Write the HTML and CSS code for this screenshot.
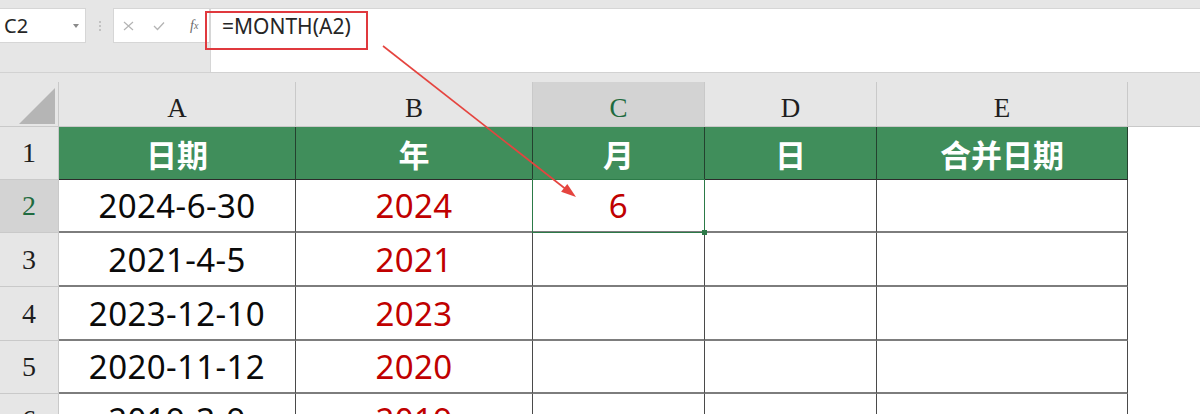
FILE: index.html
```html
<!DOCTYPE html>
<html lang="zh-CN">
<head>
<meta charset="utf-8">
<title>MONTH</title>
<link rel="stylesheet" href="styles.css">
</head>
<body>
<div class="topbar">
  <div class="namebox"><span class="nb-text">C2</span><span class="caret"></span></div>
  <div class="grip"><i></i><i></i><i></i></div>
  <div class="fxbox">
    <span class="btn"><svg width="11" height="10" viewBox="0 0 11 10"><path d="M1 1 L10 9 M10 1 L1 9" stroke="#b4b4b4" stroke-width="1.2" fill="none"/></svg></span>
    <span class="btn"><svg width="12" height="10" viewBox="0 0 12 10"><path d="M1 5 L4.5 8.5 L11 1.5" stroke="#b4b4b4" stroke-width="1.3" fill="none"/></svg></span>
    <span class="btn fx"><i>f</i><sub>x</sub></span>
  </div>
  <div class="formula"><span class="ftext">=MONTH(A2)</span></div>
</div>
<div class="gap"></div>
<div class="sheet">
  <div class="c colh corner"><svg width="58" height="44" viewBox="0 0 58 44"><polygon points="19,42 55,42 55,6" fill="#b5b5b5"/></svg></div>
  <div class="c colh">A</div>
  <div class="c colh">B</div>
  <div class="c colh selh">C</div>
  <div class="c colh">D</div>
  <div class="c colh">E</div>
  <div class="c colh last"></div>

  <div class="c rowh">1</div>
  <div class="c hd">日期</div>
  <div class="c hd">年</div>
  <div class="c hd">月</div>
  <div class="c hd">日</div>
  <div class="c hd">合并日期</div>
  <div class="c blank"></div>

  <div class="c rowh selh">2</div>
  <div class="c d">2024-6-30</div>
  <div class="c d red">2024</div>
  <div class="c d red active">6</div>
  <div class="c d"></div>
  <div class="c d"></div>
  <div class="c blank"></div>

  <div class="c rowh">3</div>
  <div class="c d">2021-4-5</div>
  <div class="c d red">2021</div>
  <div class="c d"></div>
  <div class="c d"></div>
  <div class="c d"></div>
  <div class="c blank"></div>

  <div class="c rowh">4</div>
  <div class="c d">2023-12-10</div>
  <div class="c d red">2023</div>
  <div class="c d"></div>
  <div class="c d"></div>
  <div class="c d"></div>
  <div class="c blank"></div>

  <div class="c rowh">5</div>
  <div class="c d">2020-11-12</div>
  <div class="c d red">2020</div>
  <div class="c d"></div>
  <div class="c d"></div>
  <div class="c d"></div>
  <div class="c blank"></div>

  <div class="c rowh">6</div>
  <div class="c d">2019-3-9</div>
  <div class="c d red">2019</div>
  <div class="c d"></div>
  <div class="c d"></div>
  <div class="c d"></div>
  <div class="c blank"></div>
</div>
<svg class="arrow" width="1200" height="414" viewBox="0 0 1200 414">
  <line x1="383" y1="46" x2="565" y2="188.5" stroke="#e5443f" stroke-width="1.6"/>
  <polygon points="576,197 561.1,191.7 567.3,183.9" fill="#e5443f"/>
</svg>
</body>
</html>
```

FILE: styles.css
```css
html, body {
  margin: 0;
  padding: 0;
}
body {
  width: 1200px;
  height: 414px;
  overflow: hidden;
  position: relative;
  background: #e6e6e6;
  font-family: "Noto Sans", "Noto Sans CJK SC", sans-serif;
  color: #000;
}

/* ---------- formula bar ---------- */
.topbar {
  display: flex;
  align-items: flex-start;
  height: 73px;
  box-sizing: border-box;
  padding-top: 8px;
  background: #e6e6e6;
  border-bottom: 1px solid #d2d2d2;
}
.namebox {
  width: 86px;
  height: 35px;
  box-sizing: border-box;
  background: #fff;
  border: 1px solid #d6d6d6;
  border-left: none;
  display: flex;
  align-items: center;
  justify-content: space-between;
  padding: 0 6px 0 4px;
  font-size: 20px;
  color: #262626;
}
.nb-text {
  line-height: 1;
}
.caret {
  width: 0;
  height: 0;
  border-left: 3px solid transparent;
  border-right: 3px solid transparent;
  border-top: 4px solid #8a8a8a;
}
.grip {
  width: 27px;
  height: 35px;
  display: flex;
  flex-direction: column;
  align-items: center;
  justify-content: center;
  gap: 2px;
}
.grip i {
  width: 2px;
  height: 2px;
  background: #c2c2c2;
}
.fxbox {
  width: 97px;
  height: 35px;
  box-sizing: border-box;
  background: #fff;
  border: 1px solid #d6d6d6;
  display: flex;
  align-items: center;
}
.btn {
  width: 30px;
  display: flex;
  justify-content: center;
  align-items: center;
}
.fx {
  font-family: "Liberation Serif", serif;
  font-size: 14px;
  color: #6a6a6a;
  padding-left: 6px;
}
.fx sub {
  font-size: 10px;
  font-style: italic;
  vertical-align: -1px;
}
.formula {
  flex: 1;
  height: 64px;
  box-sizing: border-box;
  background: #fff;
  border-top: 1px solid #d6d6d6;
  border-left: 1px solid #d6d6d6;
}
.ftext {
  display: block;
  width: 163px;
  height: 39px;
  box-sizing: border-box;
  margin: 2px 0 0 -6px;
  padding-left: 15px;
  border: 2px solid #e0393e;
  font-size: 21px;
  line-height: 27px;
  color: #262626;
}
.gap {
  height: 9px;
  background: #e6e6e6;
}

/* ---------- grid ---------- */
.sheet {
  display: grid;
  grid-template-columns: 59px 237px 237px 172px 172px 251px 72px;
  grid-template-rows: 45px 53px 53px 54px 54px 53px 53px;
  background: #fff;
}
.c {
  box-sizing: border-box;
  display: flex;
  align-items: center;
  justify-content: center;
  position: relative;
  white-space: nowrap;
}
.colh {
  background: #e6e6e6;
  border-right: 1px solid #c9c9c9;
  border-bottom: 1px solid #c9c9c9;
  font-family: "Liberation Serif", serif;
  font-size: 27px;
  color: #1e1e1e;
  padding-top: 9px;
}
.colh.last {
  border-right: none;
}
.corner {
  padding-top: 0;
  align-items: flex-start;
  justify-content: flex-start;
}
.corner svg {
  display: block;
}
.rowh {
  background: #e6e6e6;
  border-right: 1px solid #c9c9c9;
  border-bottom: 1px solid #c9c9c9;
  font-family: "Liberation Serif", serif;
  font-size: 28px;
  color: #1e1e1e;
}
.selh {
  background: #d3d3d3;
  color: #1f6b40;
}
.hd {
  background: #408e5b;
  color: #fff;
  font-family: "Noto Sans CJK SC", "Noto Sans", sans-serif;
  font-weight: 700;
  font-size: 31px;
  border-right: 1px solid #24412f;
  border-bottom: 1px solid #2b2b2b;
}
.d {
  background: #fff;
  border-right: 1px solid #4a4a4a;
  border-bottom: 2px solid #7d7d7d;
  font-size: 33px;
  letter-spacing: 0.4px;
  color: #0a0a0a;
}
.red {
  color: #c00000;
}
.blank {
  background: #fff;
}
.active::after {
  content: "";
  position: absolute;
  left: -1px;
  top: -1px;
  right: -1px;
  bottom: -2px;
  border: 1px solid #2c7a48;
}
.active::before {
  content: "";
  position: absolute;
  right: -3px;
  bottom: -4px;
  width: 5px;
  height: 5px;
  background: #2c7a48;
  z-index: 2;
}

/* ---------- annotation arrow ---------- */
.arrow {
  position: absolute;
  left: 0;
  top: 0;
  pointer-events: none;
}
```
